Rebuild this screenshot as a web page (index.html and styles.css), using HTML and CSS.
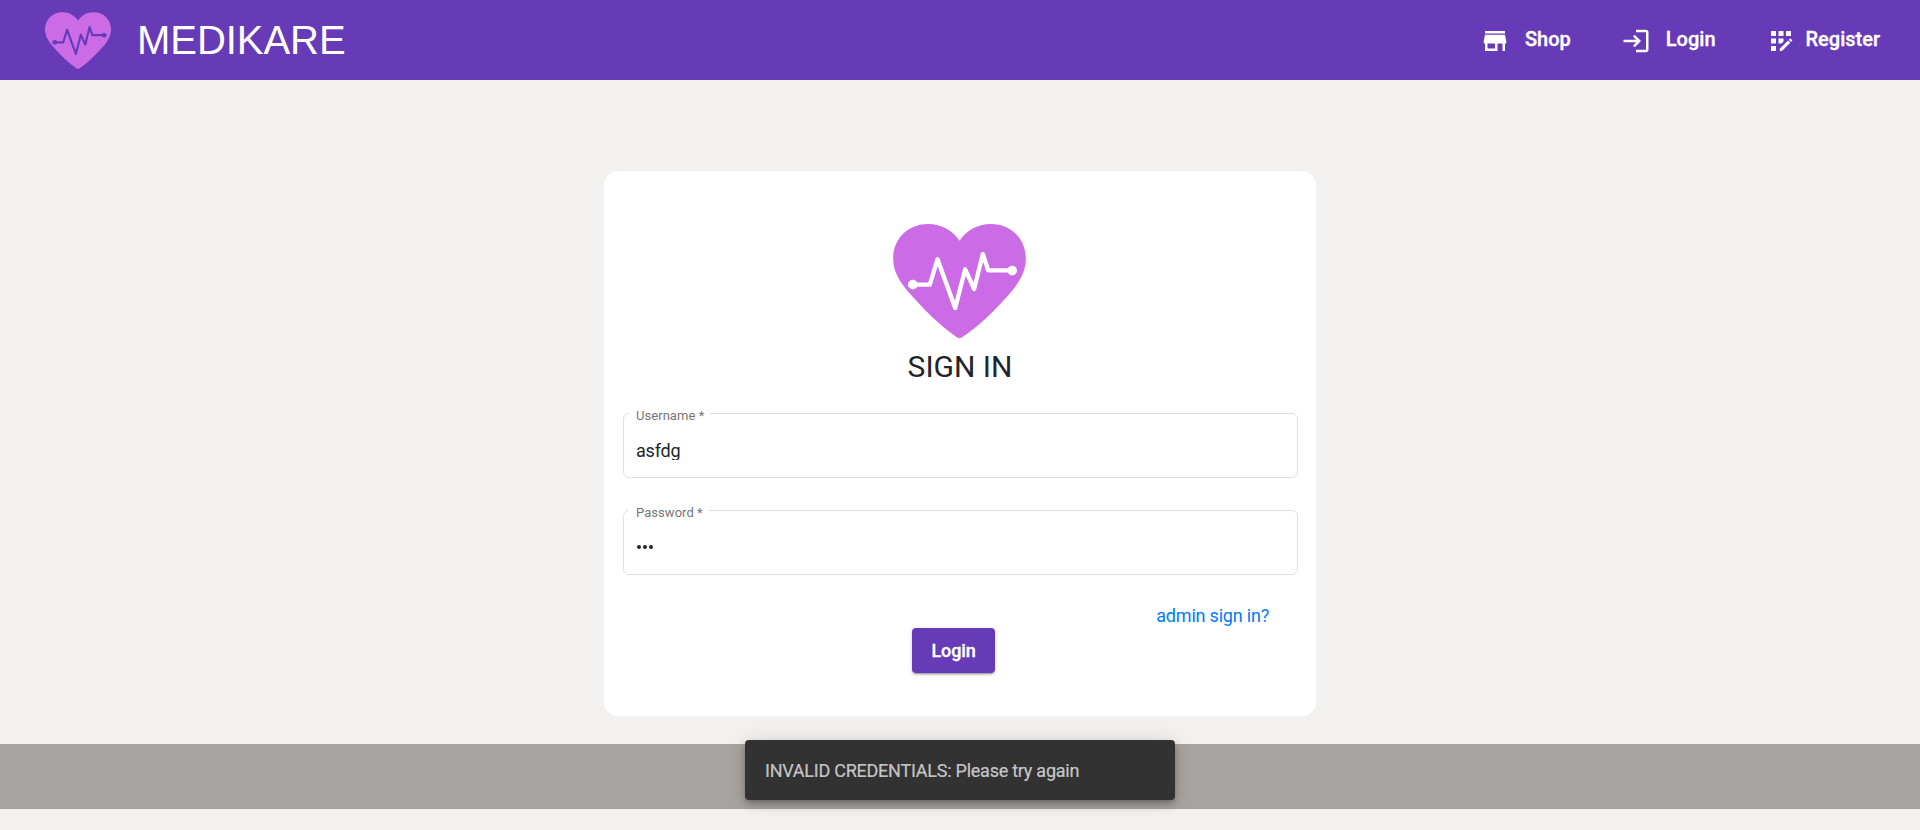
FILE: index.html
```html
<!DOCTYPE html>
<html lang="en">
<head>
<meta charset="utf-8">
<title>Medikare</title>
<link rel="stylesheet" href="styles.css">
</head>
<body>
<svg width="0" height="0" class="defs" aria-hidden="true">
  <symbol id="heart" viewBox="99 72 398 342">
    <path fill="#cb6ce6" d="M298 122C277 92 245 72 204 72C143 72 99 117 99 176C99 217 121 249 153 285C190 327 239 377 288 410Q298 418 308 410C357 377 406 329 443 287C475 251 497 218 497 176C497 117 453 72 392 72C351 72 319 92 298 122Z"/>
    <path fill="none" stroke="currentColor" stroke-width="13" stroke-linejoin="round" d="M157 254H209L232 178L285 324L315 208L342 267L368 162L384 211H456"/>
    <circle cx="158" cy="254" r="14.5" fill="currentColor"/>
    <circle cx="456" cy="212" r="14.5" fill="currentColor"/>
  </symbol>
</svg>
<header class="navbar">
  <a class="brand"><svg class="brand-logo"><use href="#heart"/></svg><span>MEDIKARE</span></a>
  <nav class="links">
    <a class="link shop"><svg viewBox="0 0 24 24"><path d="M20 4H4v2h16V4zm1 10v-2l-1-5H4l-1 5v2h1v6h10v-6h4v6h2v-6h1zm-9 4H6v-4h6v4z"/></svg><span>Shop</span></a>
    <a class="link login"><svg viewBox="0 0 24 24"><path d="M11 7L9.6 8.4l2.6 2.6H2v2h10.2l-2.6 2.6L11 17l5-5-5-5zm9 12h-8v2h8c1.1 0 2-.9 2-2V5c0-1.1-.9-2-2-2h-8v2h8v14z"/></svg><span>Login</span></a>
    <a class="link register"><svg viewBox="0 0 24 24"><path d="M10 4h4v4h-4zM4 16h4v4H4zM4 10h4v4H4zM4 4h4v4H4zM16 4h4v4h-4zM14 12.42V10h-4v4h2.42zM20.88 11.29l-1.17-1.17c-.16-.16-.42-.16-.58 0l-.88.88L20 12.75l.88-.88c.16-.16.16-.42 0-.58zM11 18.25V20h1.75l6.67-6.67-1.75-1.75z"/></svg><span>Register</span></a>
  </nav>
</header>
<main class="card">
  <svg class="card-logo"><use href="#heart"/></svg>
  <h1 class="title">SIGN IN</h1>
  <div class="field"><span class="label">Username *</span><div class="value">asfdg</div></div>
  <div class="field"><span class="label">Password *</span><div class="value dots"><i></i><i></i><i></i></div></div>
  <a class="admin">admin sign in?</a>
  <button class="submit">Login</button>
</main>
<footer class="footer"></footer>
<div class="snackbar">INVALID CREDENTIALS: Please try again</div>
</body>
</html>
```
FILE: styles.css
```css
* { box-sizing: border-box; }
body {
  margin: 0;
  height: 830px;
  overflow: hidden;
  background: #f2f1ef;
  font-family: Roboto, "Liberation Sans", sans-serif;
  color: #212529;
}
.defs { position: absolute; }
.navbar {
  height: 80px;
  padding: 0 40px 0 45px;
  background: #673ab7;
  color: #fff;
  display: flex;
  align-items: center;
  justify-content: space-between;
}
.brand { display: flex; align-items: center; gap: 26px; font: 40px/48px "Liberation Sans", Arial, sans-serif; letter-spacing: -0.05px; }
.brand span { margin-top: -1px; }
.brand-logo { width: 66px; height: 57px; color: #673ab7; }
.links { display: flex; }
.link { display: flex; align-items: center; font-size: 20px; font-weight: 500; line-height: 30px; -webkit-text-stroke: 0.35px #fff; }
.link svg { width: 30px; height: 30px; fill: #fff; margin-top: 2px; }
.link span { margin-top: -2px; }
.shop { gap: 15px; }
.login { gap: 15px; margin-left: 50px; }
.register { gap: 10px; margin-left: 50px; }
.card {
  width: 712px;
  height: 545px;
  margin: 91px auto 0;
  padding: 53px 18px 0 19px;
  border-radius: 14px;
  background: #fff;
  display: flex;
  flex-direction: column;
}
.card-logo { width: 133px; height: 114px; margin-left: 270px; color: #fff; flex: none; }
.title { margin: 9px 1px 27px 0; font-size: 30px; font-weight: 400; line-height: 39px; text-align: center; }
.field {
  position: relative;
  height: 65px;
  margin-bottom: 32px;
  padding: 26px 12px 0;
  border: 1px solid #e0e0e0;
  border-radius: 6px;
  flex: none;
}
.label {
  position: absolute;
  left: 5px;
  top: -6px;
  padding: 0 6px 0 7px;
  background: #fff;
  color: #757575;
  font-size: 13px;
  line-height: 16px;
  letter-spacing: 0.05px;
}
.value { height: 20px; overflow: hidden; font-size: 18px; line-height: 22px; letter-spacing: -0.2px; }
.dots { display: flex; gap: 2px; padding: 8px 0 0 1px; }
.dots i { width: 4px; height: 4px; border-radius: 50%; background: #212529; }
.admin { align-self: flex-end; margin: -5px 29px 0 0; color: #007bff; font-size: 18px; line-height: 27px; letter-spacing: -0.2px; }
.submit {
  width: 83px;
  height: 45px;
  margin: -1px 0 0 289px;
  padding: 0;
  border: 0;
  border-radius: 4px;
  background: #673ab7;
  color: #fff;
  font: 500 18px/45px Roboto, sans-serif;
  letter-spacing: -0.15px;
  -webkit-text-stroke: 0.35px #fff;
  box-shadow: 0 3px 1px -2px rgba(0,0,0,.2), 0 2px 2px rgba(0,0,0,.14), 0 1px 5px rgba(0,0,0,.12);
}
.footer { height: 65px; margin-top: 28px; background: #a7a3a1; }
.snackbar {
  position: absolute;
  left: 745px;
  top: 740px;
  width: 430px;
  height: 60px;
  padding: 0 20px;
  border-radius: 4px;
  background: #323232;
  color: rgba(255,255,255,.7);
  font-size: 18px;
  line-height: 61px;
  letter-spacing: -0.24px;
  -webkit-text-stroke: 0.2px rgba(255,255,255,.7);
  box-shadow: 0 3px 5px -1px rgba(0,0,0,.2), 0 6px 10px rgba(0,0,0,.14), 0 1px 18px rgba(0,0,0,.12);
}
```
